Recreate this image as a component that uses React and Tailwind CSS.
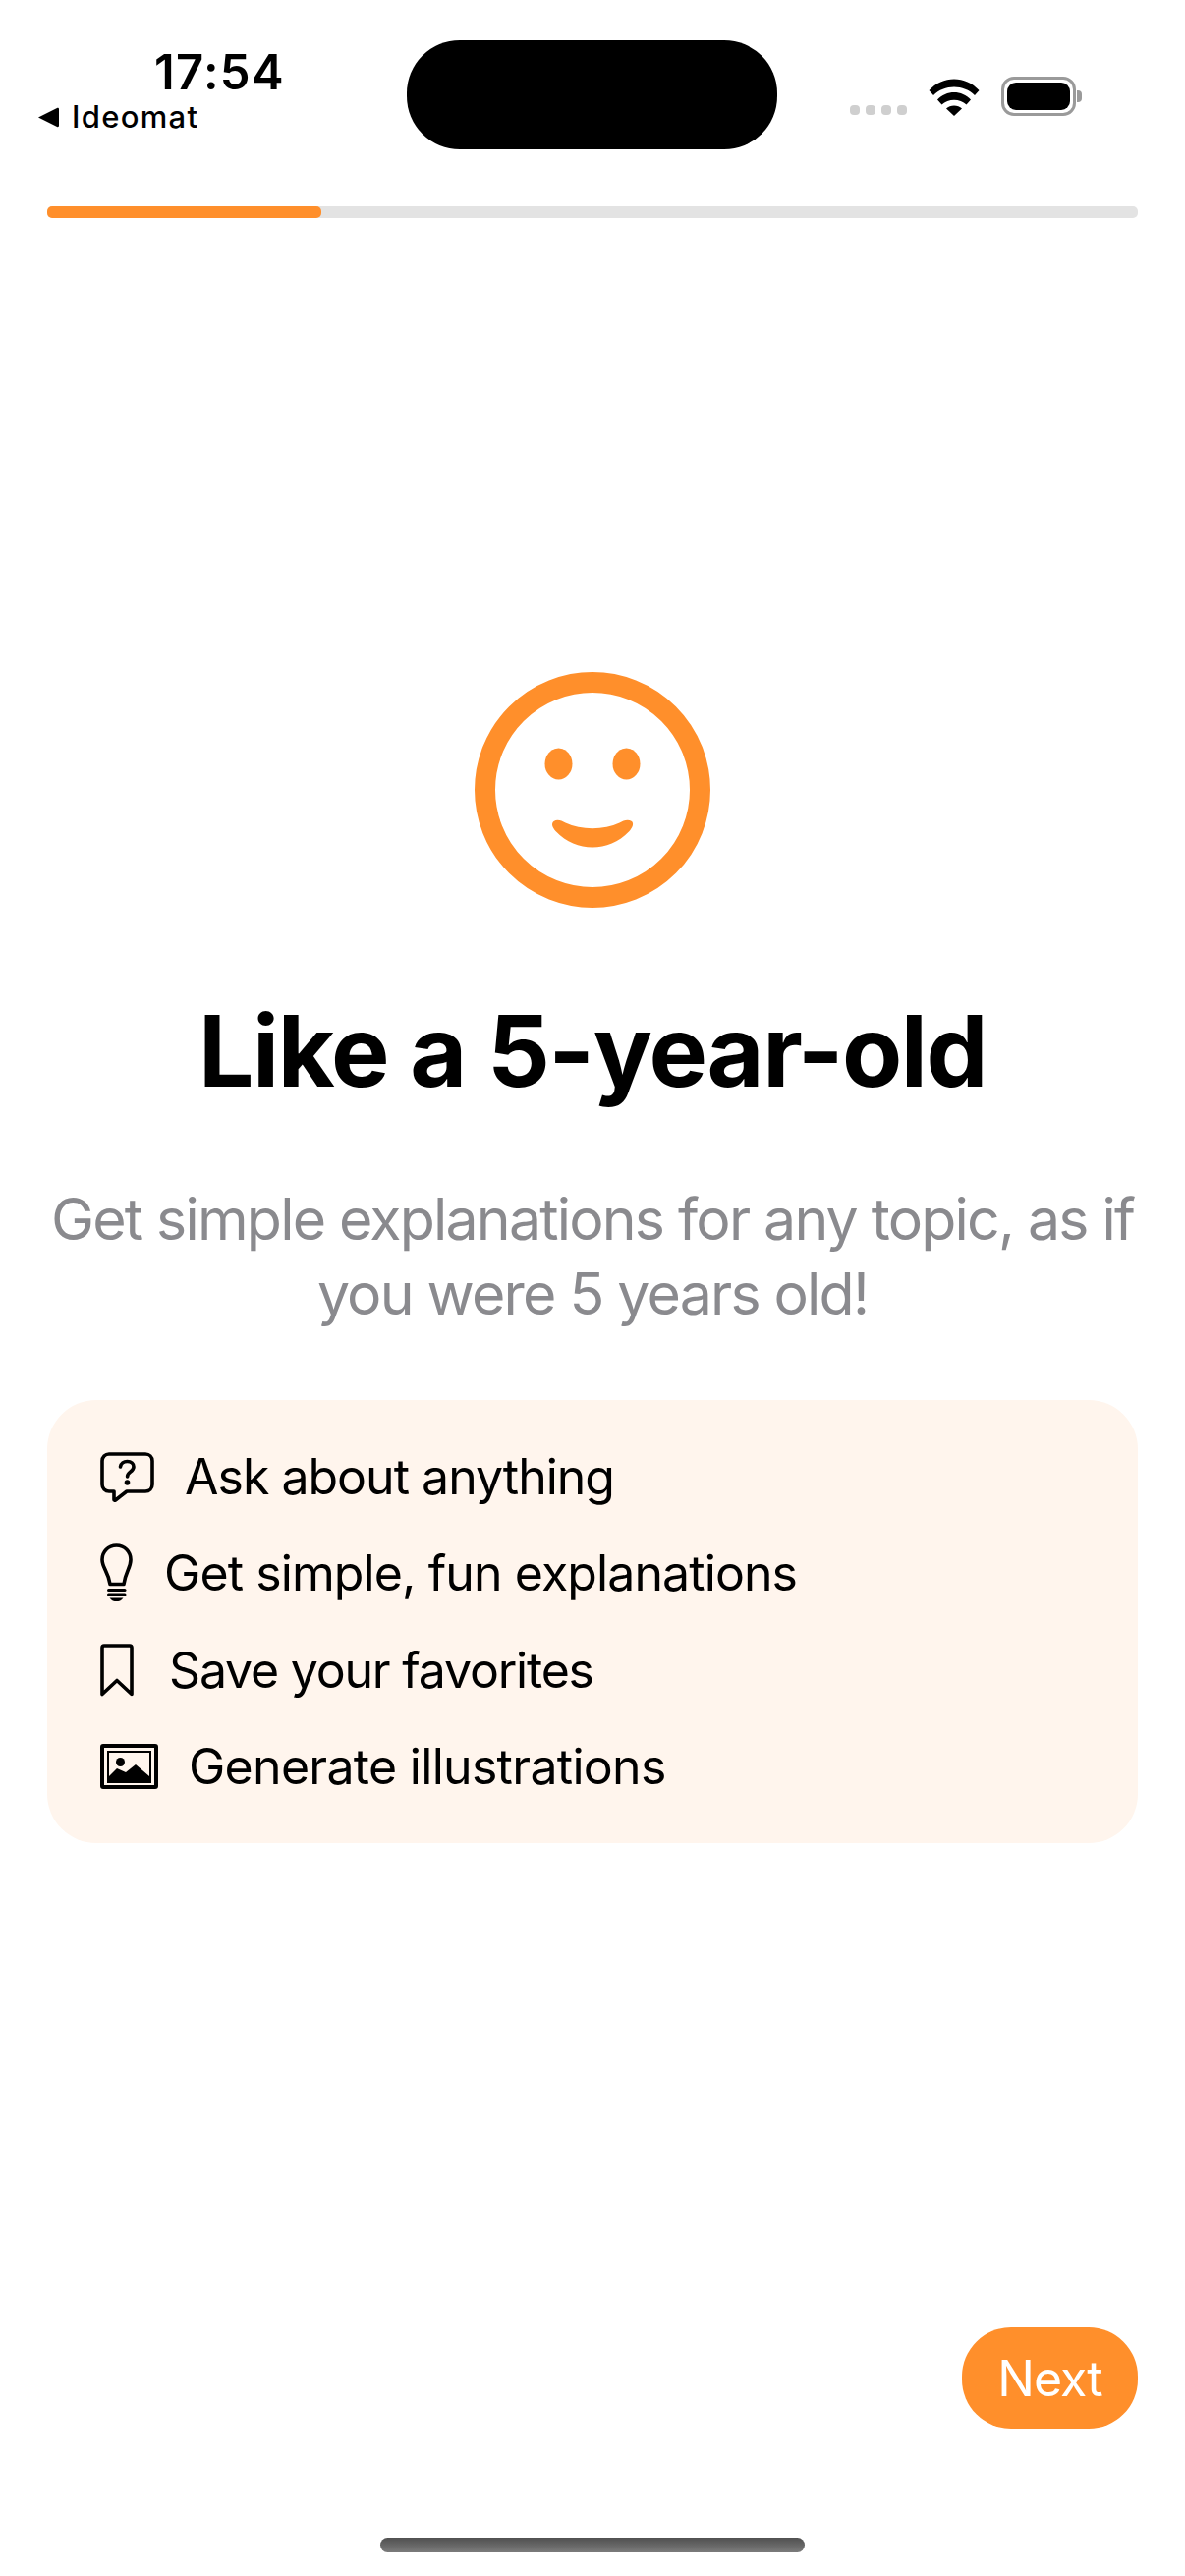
const Smiley = () => (
  <svg width="240" height="240" viewBox="-0.5 -0.5 240 240" className="block">
    <circle cx="119.5" cy="119.5" r="109.5" fill="none" stroke="#ff8f2b" strokeWidth="21" />
    <ellipse cx="85" cy="93" rx="14" ry="16" fill="#ff8f2b" />
    <ellipse cx="154" cy="93" rx="14" ry="16" fill="#ff8f2b" />
    <path d="M80 151.500C84 149 88 151 92 153C108 160.500 131 160.500 147 153C151 151 155 149 159.500 151.500C162 154 160 158 157 161.500C146 173 133 178 119.500 178C106 178 93 173 82 161.500C79 158 77 154 80 151.500Z" fill="#ff8f2b" />
  </svg>
);

const QuestionIcon = () => (
  <svg width="55" height="51" viewBox="0 0 55 51" fill="none" className="block">
    <path d="M9 2H46C50 2 53 5 53 9V33C53 37 50 40 46 40H27L15.500 49C15 49.500 14 49 14 48.500V40H9C5 40 2 37 2 33V9C2 5 5 2 9 2Z" stroke="black" strokeWidth="3.600" strokeLinejoin="round" />
    <path d="M20.500 15C21 11.500 24 9.500 27.500 9.500C31.500 9.500 34 12 34 15C34 17.500 32.500 18.800 30.500 20.200C28.700 21.500 27.600 22.500 27.600 25" stroke="black" strokeWidth="3.600" strokeLinecap="round" />
    <circle cx="27.500" cy="31" r="2.800" fill="black" />
  </svg>
);

const BulbIcon = () => (
  <svg width="33" height="60" viewBox="0 0 33 60" fill="none" className="block">
    <path d="M16.500 2C8 2 2 8.500 2 16.500C2 25 8 28 10 41.500H24C26 28 31 25 31 16.500C31 8.500 25 2 16.500 2Z" stroke="black" strokeWidth="3.600" strokeLinejoin="round" />
    <path d="M8.500 47.500H25" stroke="black" strokeWidth="3" strokeLinecap="round" />
    <path d="M8.500 52H25" stroke="black" strokeWidth="3" strokeLinecap="round" />
    <path d="M9.500 55.500H23.500C21.500 58.500 19 59 16.500 59C14 59 11.500 58.500 9.500 55.500Z" fill="black" />
  </svg>
);

const BookmarkIcon = () => (
  <svg width="34" height="54" viewBox="0 0 34 54" fill="none" className="block">
    <path d="M4 2H30C31.200 2 32 2.800 32 4V51.500L17 37.500L2 51.500V4C2 2.800 2.800 2 4 2Z" stroke="black" strokeWidth="3.600" strokeLinejoin="round" />
  </svg>
);

const ImageIcon = () => (
  <svg width="59" height="46" viewBox="0 0 59 46" fill="none" className="block">
    <rect x="2" y="2" width="55" height="42" rx="1" stroke="black" strokeWidth="4" />
    <rect x="8" y="8" width="43" height="31" stroke="black" strokeWidth="2" />
    <circle cx="20.500" cy="18.500" r="4.500" fill="black" />
    <path d="M9 38V33L17 25L26 29L36 21L50 33V38Z" fill="black" />
  </svg>
);

const rows = [
  { Icon: QuestionIcon, text: "Ask about anything", cls: "gap-[31px] tracking-[-1px]" },
  { Icon: BulbIcon, text: "Get simple, fun explanations", cls: "gap-[32px] tracking-[-0.9px]" },
  { Icon: BookmarkIcon, text: "Save your favorites", cls: "gap-[36px] tracking-[-1.2px]" },
  { Icon: ImageIcon, text: "Generate illustrations", cls: "gap-[31px] tracking-[-0.7px]" },
];

export default function App() {
  return (
    <div className="w-[1206px] h-[2622px] bg-white flex flex-col font-[Inter,sans-serif] text-black overflow-hidden">
      <header className="h-[210px] shrink-0 flex items-start">
        <div className="w-[414px] pl-[38px] pt-[49px] flex flex-col">
          <div className="pl-[119px] text-[49px] leading-[50px] font-semibold tracking-[1.3px]">17:54</div>
          <div className="flex items-center gap-[13px] mt-[2px] text-[31px] leading-[36px] font-medium tracking-[1.3px]">
            <svg width="22" height="21" viewBox="0 0 22 21" className="block">
              <path d="M1 10.500L20 1C21 .5 22 1 22 2V19C22 20 21 20.500 20 20L1 10.500Z" fill="black" />
            </svg>
            <span>Ideomat</span>
          </div>
        </div>
        <div className="mt-[41px] w-[377px] h-[111px] bg-black rounded-[54px]" />
        <div className="flex items-end ml-[74px] mt-[78px]">
          <div className="flex gap-[6px] mb-[1px]">
            <div className="w-[10px] h-[10px] rounded-[4px] bg-[#cfcfcf]" />
            <div className="w-[10px] h-[10px] rounded-[4px] bg-[#cfcfcf]" />
            <div className="w-[10px] h-[10px] rounded-[4px] bg-[#cfcfcf]" />
            <div className="w-[10px] h-[10px] rounded-[4px] bg-[#cfcfcf]" />
          </div>
          <svg width="52" height="38" viewBox="0 0 52 38" className="block ml-[22px]">
            <path d="M0.500 12C14 -3.500 38 -3.500 51.500 12L47 17C36 5.500 16 5.500 5 17Z" fill="black" />
            <path d="M9 21.500C18 11.500 34 11.500 43 21.500L38.500 26.500C32 20 20 20 13.500 26.500Z" fill="black" />
            <path d="M18 30.500C22 26.500 30 26.500 34 30.500L26 38Z" fill="black" />
          </svg>
          <div className="flex items-center ml-[22px]">
            <div className="w-[76px] h-[40px] rounded-[13px] border-[3px] border-[#9a9a9a] p-[3px]">
              <div className="w-full h-full rounded-[9px] bg-black" />
            </div>
            <div className="w-[5px] h-[12px] ml-[1px] rounded-r-[4px] bg-[#9a9a9a]" />
          </div>
        </div>
      </header>

      <main className="flex-1 flex flex-col items-center px-[48px]">
        <div className="w-full h-[12px] rounded-[5px] bg-[#e3e3e3] shrink-0">
          <div className="w-[279px] h-full rounded-[5px] bg-[#ff8f2b]" />
        </div>

        <div className="mt-[462px]">
          <Smiley />
        </div>

        <h1 className="mt-[84px] text-[100px] leading-[124px] font-bold text-center whitespace-nowrap tracking-[-1.5px]">Like a 5-year-old</h1>

        <p className="mt-[71px] text-[59px] leading-[76px] text-center text-[#8a8a8e] tracking-[-1.8px]">
          Get simple explanations for any topic, as if you were 5 years old!
        </p>

        <div className="mt-[70px] w-full h-[451px] rounded-[50px] bg-[#fff5ed] px-[54px] pt-[48px] flex flex-col gap-[38.25px]">
          {rows.map(({ Icon, text, cls }) => (
            <div key={text} className={`flex items-center h-[60px] text-[50px] leading-[60px] ${cls}`}>
              <Icon />
              <span>{text}</span>
            </div>
          ))}
        </div>

        <div className="mt-auto w-full flex justify-end">
          <button className="w-[179px] h-[103px] rounded-[50px] bg-[#ff8f2b] text-white text-[50px] leading-[60px] text-center tracking-[-1px]">Next</button>
        </div>

        <div className="mt-[111px] mb-[24px] w-[432px] h-[15px] rounded-full bg-gradient-to-b from-[#505050] to-[#7c7c7c] shrink-0" />
      </main>
    </div>
  );
}
